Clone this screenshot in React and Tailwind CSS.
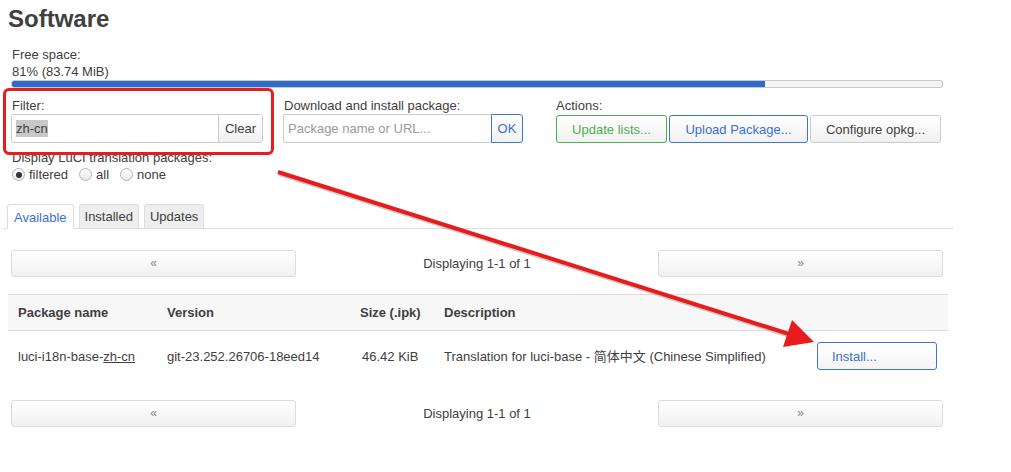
import React from "react";

function Btn({ className = "", children }) {
  return (
    <div
      className={
        "flex items-center justify-center rounded-[3px] border bg-linear-to-b from-white to-[#f1f1f1] " +
        className
      }
    >
      {children}
    </div>
  );
}

function Radio({ checked, label }) {
  return (
    <div className="mr-[11px] flex items-center">
      <span className="flex h-[13px] w-[13px] items-center justify-center rounded-full border border-[#b5b5b5] bg-linear-to-b from-white to-[#e8e8e8]">
        {checked && <span className="h-[6px] w-[6px] rounded-full bg-[#333]" />}
      </span>
      <span className="ml-[4px]">{label}</span>
    </div>
  );
}

function Pager() {
  return (
    <div className="ml-[11px] flex w-[932px] items-center justify-between">
      <Btn className="h-[27px] w-[285px] border-[#dcdcdc] text-[12px] text-[#888]">«</Btn>
      <span>Displaying 1-1 of 1</span>
      <Btn className="h-[27px] w-[285px] border-[#dcdcdc] text-[12px] text-[#888]">»</Btn>
    </div>
  );
}

export default function App() {
  return (
    <div className="relative h-[472px] w-[1011px] overflow-hidden bg-white text-[13px] leading-[17px] text-[#404040] font-['Liberation_Sans','Noto_Sans_CJK_SC',Arial,sans-serif]">
      <h2 className="pl-[8px] pt-[5px] text-[24px] font-bold leading-[27px] text-[#404040]">
        Software
      </h2>

      <div className="ml-[12px] mt-[14px]">Free space:</div>
      <div className="ml-[12px]">81% (83.74 MiB)</div>
      <div className="ml-[11px] h-[8px] w-[932px] overflow-hidden rounded-[3px] border border-[#c8c8c8] bg-[#f4f4f4]">
        <div className="h-full w-[81%] bg-[#2d6bc7]" />
      </div>

      <div className="mt-[9px] flex items-start">
        <div className="ml-[11px] w-[252px]">
          <div className="pl-[1px]">Filter:</div>
          <div className="flex h-[29px] overflow-hidden rounded-[3px] border border-[#cccccc]">
            <div className="flex flex-1 items-center pl-[4px]">
              <span className="bg-[#c8c8c8]">zh-cn</span>
            </div>
            <div className="flex w-[44px] items-center justify-center border-l border-[#cccccc] bg-linear-to-b from-white to-[#f1f1f1]">
              Clear
            </div>
          </div>
        </div>

        <div className="ml-[20px] w-[240px]">
          <div className="pl-[1px]">Download and install package:</div>
          <div className="flex h-[29px]">
            <div className="flex flex-1 items-center rounded-l-[3px] border border-r-0 border-[#cccccc] pl-[4px] text-[#999]">
              Package name or URL...
            </div>
            <div className="flex w-[32px] items-center justify-center rounded-r-[3px] border border-[#3a78d4] bg-linear-to-b from-white to-[#f1f1f1] text-[#3a6fd2]">
              OK
            </div>
          </div>
        </div>

        <div className="ml-[33px]">
          <div>Actions:</div>
          <div className="flex gap-[2px] pt-[1px]">
            <Btn className="h-[28px] w-[111px] border-[#4cae57] text-[#4cae4c]">Update lists...</Btn>
            <Btn className="h-[28px] w-[139px] border-[#3b76d2] text-[#3a6fd6]">Upload Package...</Btn>
            <Btn className="h-[28px] w-[131px] border-[#cccccc] text-[#404040]">Configure opkg...</Btn>
          </div>
        </div>
      </div>

      <div className="ml-[12px] mt-[6px]">Display LuCI translation packages:</div>
      <div className="ml-[12px] flex items-center">
        <Radio checked label="filtered" />
        <Radio label="all" />
        <Radio label="none" />
      </div>

      <div className="ml-[3px] mt-[21px] flex w-[950px] gap-[5px] border-b border-[#dddddd] pl-[4px]">
        <div className="-mb-px flex h-[25px] items-center rounded-t-[3px] border border-b-0 border-[#dddddd] bg-white px-[6px] text-[#3a6fd6]">
          Available
        </div>
        <div className="flex h-[24px] items-center rounded-t-[3px] border border-b-0 border-[#dddddd] bg-[#eeeeee] px-[5px]">
          Installed
        </div>
        <div className="flex h-[24px] items-center rounded-t-[3px] border border-b-0 border-[#dddddd] bg-[#eeeeee] px-[5px]">
          Updates
        </div>
      </div>

      <div className="mt-[21px]">
        <Pager />
      </div>

      <div className="ml-[8px] mt-[17px] w-[940px]">
        <div className="grid h-[37px] grid-cols-[149px_193px_84px_373px_141px] items-center border-y border-[#dddddd] bg-[#f7f7f7] font-bold">
          <div className="pl-[10px]">Package name</div>
          <div className="pl-[10px]">Version</div>
          <div className="pl-[10px]">Size (.ipk)</div>
          <div className="pl-[10px]">Description</div>
          <div />
        </div>
        <div className="grid h-[50px] grid-cols-[149px_193px_84px_373px_141px] items-center">
          <div className="pl-[10px]">
            luci-i18n-base-<span className="underline">zh-cn</span>
          </div>
          <div className="pl-[10px]">git-23.252.26706-18eed14</div>
          <div className="pl-[12px]">46.42 KiB</div>
          <div className="pl-[10px] whitespace-nowrap">
            Translation for luci-base - 简体中文 (Chinese Simplified)
          </div>
          <div className="pl-[10px]">
            <div className="flex h-[28px] w-[120px] items-center rounded-[3px] border border-[#3a78d6] bg-linear-to-b from-white to-[#f4f4f4] pl-[14px] text-[#3a6fd6]">
              Install...
            </div>
          </div>
        </div>
      </div>

      <div className="mt-[19px]">
        <Pager />
      </div>

      <div className="pointer-events-none absolute left-[3px] top-[88px] h-[67px] w-[271px] rounded-[6px] border-[3px] border-[#e81c1c]" />

      <svg
        className="pointer-events-none absolute left-0 top-0"
        width="1011"
        height="472"
        viewBox="0 0 1011 472"
      >
        <line x1="279" y1="174" x2="790" y2="336" stroke="#9a9a9a" strokeOpacity="0.5" strokeWidth="4" />
        <line x1="278" y1="172" x2="789" y2="334" stroke="#e81c1c" strokeWidth="4" />
        <polygon points="814,342 783,347 792,320" fill="#e81c1c" />
      </svg>
    </div>
  );
}
